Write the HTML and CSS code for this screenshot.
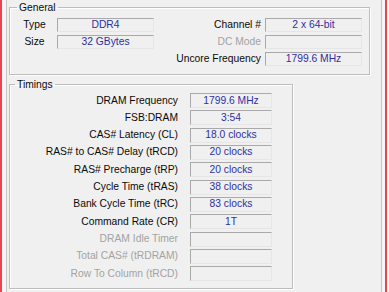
FILE: index.html
```html
<!DOCTYPE html>
<html lang="en">
<head>
    <meta charset="UTF-8">
    <title>Memory</title>
    <link rel="stylesheet" href="styles.css">
</head>
<body>
    <div class="window">
        <div class="tab-page">
            <fieldset class="group general">
                <legend>General</legend>
                <div class="general-grid">
                    <span class="label centre">Type</span>
                    <span class="field">DDR4</span>
                    <span class="label right">Channel #</span>
                    <span class="field">2 x 64-bit</span>

                    <span class="label centre">Size</span>
                    <span class="field">32 GBytes</span>
                    <span class="label right off">DC Mode</span>
                    <span class="field"></span>

                    <span></span>
                    <span></span>
                    <span class="label right">Uncore Frequency</span>
                    <span class="field">1799.6 MHz</span>
                </div>
            </fieldset>

            <fieldset class="group timings">
                <legend>Timings</legend>
                <div class="timing-grid">
                    <span class="label">DRAM Frequency</span>
                    <span class="field">1799.6 MHz</span>
                    <span class="label">FSB:DRAM</span>
                    <span class="field">3:54</span>
                    <span class="label">CAS# Latency (CL)</span>
                    <span class="field">18.0 clocks</span>
                    <span class="label">RAS# to CAS# Delay (tRCD)</span>
                    <span class="field">20 clocks</span>
                    <span class="label">RAS# Precharge (tRP)</span>
                    <span class="field">20 clocks</span>
                    <span class="label">Cycle Time (tRAS)</span>
                    <span class="field">38 clocks</span>
                    <span class="label">Bank Cycle Time (tRC)</span>
                    <span class="field">83 clocks</span>
                    <span class="label">Command Rate (CR)</span>
                    <span class="field">1T</span>
                    <span class="label off">DRAM Idle Timer</span>
                    <span class="field"></span>
                    <span class="label off">Total CAS# (tRDRAM)</span>
                    <span class="field"></span>
                    <span class="label off">Row To Column (tRCD)</span>
                    <span class="field"></span>
                </div>
            </fieldset>
        </div>
    </div>
</body>
</html>
```

FILE: styles.css
```css
body {
    margin: 0;
    background-color: #f9f9f9;
    font-family: "Liberation Sans", Arial, sans-serif;
    font-size: 10.3px;
    color: #0a0a0a;
}

.window {
    width: 387px;
    height: 292px;
    padding-left: 4px;
    box-sizing: border-box;
    border-left: 2px solid #e94452;
    border-right: 2px solid #e94452;
    background-color: #f5f5f5;
}

.tab-page {
    width: 376px;
    height: 292px;
    box-sizing: border-box;
    padding: 1px 0 0 2px;
    border-left: 1px solid #c6c6c6;
    border-right: 1px solid #c6c6c6;
    background-color: #f0f0f0;
}

/* etched group box */
.group {
    margin: 0;
    padding: 0;
    border: 1px solid #bdbdbd;
    box-shadow: inset 1px 1px 0 #fff, 1px 1px 0 #fff;
    box-sizing: border-box;
}

.group legend {
    margin-left: 5px;
    padding: 0 2px;
    line-height: 13px;
}

.general {
    width: 361px;
    padding: 4px 7px 8px 2px;
}

.timings {
    width: 284px;
    margin-top: 3px;
    padding: 2px 20px 7px 0;
}

.general-grid {
    display: grid;
    grid-template-columns: 45px 97px 111px 97px;
    grid-auto-rows: 14px;
    row-gap: 3px;
    align-items: center;
}

.timing-grid {
    display: grid;
    grid-template-columns: 168px 82px;
    grid-auto-rows: 15px;
    column-gap: 12px;
    row-gap: 2.33px;
    align-items: center;
}

.label {
    line-height: 12px;
    white-space: nowrap;
    text-align: right;
}

.label.centre {
    text-align: center;
}

.label.right {
    padding-right: 4px;
}

.label.off {
    color: #a3a3a3;
}

.field {
    height: 100%;
    box-sizing: border-box;
    border: 1px solid;
    border-color: #a9a9a9 #e6e6e6 #e6e6e6 #a9a9a9;
    display: flex;
    align-items: center;
    justify-content: center;
    color: #2f2fa3;
    line-height: 12px;
}
```
